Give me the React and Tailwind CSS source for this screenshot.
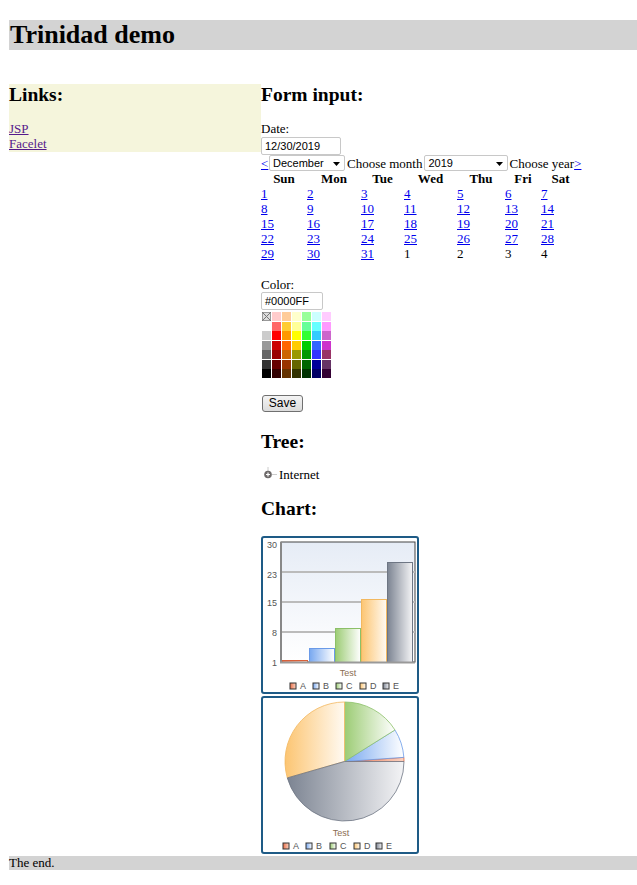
// Trinidad demo page
const days = [
  [1, 2, 3, 4, 5, 6, 7],
  [8, 9, 10, 11, 12, 13, 14],
  [15, 16, 17, 18, 19, 20, 21],
  [22, 23, 24, 25, 26, 27, 28],
  [29, 30, 31, "1", "2", "3", "4"],
];

const palette = [
  [null, "#ffcccc", "#ffcc99", "#ffffcc", "#99ff99", "#ccffff", "#ffccff"],
  ["#ffffff", "#ff6666", "#ffcc33", "#ffff99", "#66ff99", "#66ffff", "#ff99ff"],
  ["#cccccc", "#ff0000", "#ff9900", "#ffff00", "#33ff33", "#33ccff", "#cc66cc"],
  ["#999999", "#cc0000", "#ff6600", "#ffcc00", "#00cc00", "#3366ff", "#cc33cc"],
  ["#666666", "#990000", "#cc6600", "#999900", "#009900", "#3333ff", "#993366"],
  ["#333333", "#660000", "#993300", "#666600", "#006600", "#000099", "#663366"],
  ["#000000", "#330000", "#663300", "#333300", "#003300", "#000066", "#330033"],
];

const series = [
  { id: "A", from: "#e8704a", to: "#fbd2c0", stroke: "#d8603a" },
  { id: "B", from: "#78a8f0", to: "#ffffff", stroke: "#6a9ae8" },
  { id: "C", from: "#9ccc74", to: "#ffffff", stroke: "#8cc068" },
  { id: "D", from: "#fcc572", to: "#fffaf2", stroke: "#f2b860" },
  { id: "E", from: "#7c8492", to: "#f4f4f6", stroke: "#6e7684" },
];

function Grads({ prefix }) {
  return (
    <defs>
      {series.map((s) => (
        <linearGradient key={s.id} id={`${prefix}${s.id}`} x1="0" y1="0" x2="1" y2="0">
          <stop offset="0" stopColor={s.from} />
          <stop offset="1" stopColor={s.to} />
        </linearGradient>
      ))}
      <linearGradient id={`${prefix}bg`} x1="0" y1="0" x2="0" y2="1">
        <stop offset="0" stopColor="#e6ecf6" />
        <stop offset="1" stopColor="#ffffff" />
      </linearGradient>
    </defs>
  );
}

function Legend({ xs, prefix }) {
  return (
    <g fontFamily="Liberation Sans, Arial, sans-serif" fontSize="9" fill="#555">
      {series.map((s, i) => (
        <g key={s.id}>
          <rect x={xs[i]} y={145} width={6} height={6} fill={`url(#${prefix}${s.id})`} stroke="#333" strokeWidth="1" />
          <text x={xs[i] + 10} y={151}>{s.id}</text>
        </g>
      ))}
    </g>
  );
}

function BarChart() {
  const bars = [
    [19, 122],
    [46, 110],
    [72, 90],
    [98, 61],
    [124, 24],
  ];
  return (
    <svg width="154" height="154" viewBox="0 0 154 154">
      <Grads prefix="b" />
      <rect x="18" y="4" width="134" height="120" fill="url(#bbg)" stroke="#444" strokeWidth="1" />
      {[34, 64, 94].map((y) => (
        <line key={y} x1="19" x2="152" y1={y} y2={y} stroke="#bbb" strokeWidth="2" />
      ))}
      {bars.map(([x, y], i) => (
        <rect key={i} x={x + 0.5} y={y + 0.5} width="25" height={124 - y} fill={`url(#b${series[i].id})`} stroke={series[i].stroke} strokeWidth="1" />
      ))}
      <line x1="18" x2="18" y1="4" y2="125" stroke="#888" strokeWidth="2" />
      <line x1="17" x2="152" y1="124.5" y2="124.5" stroke="#999" strokeWidth="2" />
      <g fontFamily="Liberation Sans, Arial, sans-serif" fontSize="9" fill="#555" textAnchor="end">
        <text x="14" y="10">30</text>
        <text x="14" y="40">23</text>
        <text x="14" y="68">15</text>
        <text x="14" y="98">8</text>
        <text x="14" y="128">1</text>
      </g>
      <text x="85" y="138" textAnchor="middle" fontFamily="Liberation Sans, Arial, sans-serif" fontSize="9" fill="#8c6d50">Test</text>
      <Legend xs={[27, 50, 73, 97, 120]} prefix="b" />
    </svg>
  );
}

function slice(cx, cy, r, a1, a2) {
  const rad = (a) => (a * Math.PI) / 180;
  const x1 = cx + r * Math.cos(rad(a1));
  const y1 = cy - r * Math.sin(rad(a1));
  const x2 = cx + r * Math.cos(rad(a2));
  const y2 = cy - r * Math.sin(rad(a2));
  const large = a2 - a1 > 180 ? 1 : 0;
  return `M${cx} ${cy} L${x1} ${y1} A${r} ${r} 0 ${large} 0 ${x2} ${y2} Z`;
}

function PieChart() {
  const angles = [0, 4, 32, 90, 196, 360];
  return (
    <svg width="154" height="154" viewBox="0 0 154 154">
      <Grads prefix="p" />
      {series.map((s, i) => (
        <path key={s.id} d={slice(81.5, 63.5, 59.5, angles[i], angles[i + 1])} fill={`url(#p${s.id})`} stroke={s.stroke} strokeWidth="0.8" />
      ))}
      <text x="78" y="138" textAnchor="middle" fontFamily="Liberation Sans, Arial, sans-serif" fontSize="9" fill="#8c6d50">Test</text>
      <Legend xs={[20, 43, 67, 91, 113]} prefix="p" />
    </svg>
  );
}

function Select({ value, width }) {
  return (
    <span className={`inline-flex h-[16px] items-center justify-between border border-[#c8c8c8] rounded-[2px] bg-white pl-[3px] pr-[3px] font-['Liberation_Sans',Arial,sans-serif] text-[11px] leading-[14px] ${width}`}>
      <span>{value}</span>
      <svg width="9" height="8" viewBox="0 0 9 8">
        <path d="M1 3 L8 3 L4.5 7 Z" fill="#000" />
      </svg>
    </span>
  );
}

const colW = "grid-cols-[46px_54px_43px_53px_48px_36px_39px]";

export default function App() {
  return (
    <div className="min-h-screen bg-white pl-[9px] pt-[20px] font-['Liberation_Serif','Times_New_Roman',serif] text-[13px] leading-[15px] text-black">
      <h1 className="h-[30px] bg-[#d3d3d3] pl-px text-[26px] font-bold leading-[30px]">Trinidad demo</h1>

      <div className="mt-[34px] flex items-start">
        <div className="w-[252px] bg-[#f5f5dc] pb-px">
          <h2 className="h-[22px] text-[19.5px] font-bold leading-[22px]">Links:</h2>
          <div className="mt-[15px] flex flex-col">
            <a href="#" className="text-[#551a8b] underline">JSP</a>
            <a href="#" className="text-[#551a8b] underline">Facelet</a>
          </div>
        </div>

        <div className="flex flex-col items-start">
          <h2 className="h-[22px] text-[19.5px] font-bold leading-[22px]">Form input:</h2>
          <div className="mt-[15px]">Date:</div>
          <div className="mt-px flex h-[18px] w-[80px] items-center rounded-[2px] border border-[#c8c8c8] pl-[3px] font-['Liberation_Sans',Arial,sans-serif] text-[11px]">
            12/30/2019
          </div>
          <div className="flex h-[16px] items-center">
            <a href="#" className="w-[8px] text-[#0000ee] underline">&lt;</a>
            <Select value="December" width="w-[76px]" />
            <span className="ml-[2px] mr-[2px]">Choose month</span>
            <Select value="2019" width="w-[84px]" />
            <span className="ml-px">Choose year</span>
            <a href="#" className="text-[#0000ee] underline">&gt;</a>
          </div>
          <div className={`grid ${colW}`}>
            {["Sun", "Mon", "Tue", "Wed", "Thu", "Fri", "Sat"].map((d) => (
              <div key={d} className="text-center font-bold">{d}</div>
            ))}
            {days.flat().map((d, i) =>
              typeof d === "number" ? (
                <a key={i} href="#" className="text-[#0000ee] underline">{d}</a>
              ) : (
                <span key={i}>{d}</span>
              )
            )}
          </div>

          <div className="mt-[16px]">Color:</div>
          <div className="flex h-[18px] w-[62px] items-center rounded-[2px] border border-[#c8c8c8] pl-[3px] font-['Liberation_Sans',Arial,sans-serif] text-[11px]">
            #0000FF
          </div>
          <div className="ml-px mt-[2px] flex flex-col gap-y-[0.5px]">
            {palette.map((row, r) => (
              <div key={r} className="flex gap-x-px">
                {row.map((c, k) =>
                  c === null ? (
                    <svg key={k} width="9" height="9" viewBox="0 0 9 9" className="bg-[#dddddd]">
                      <rect x="0.5" y="0.5" width="8" height="8" fill="none" stroke="#999" />
                      <path d="M0 0 L9 9 M9 0 L0 9" stroke="#777" strokeWidth="1" />
                    </svg>
                  ) : (
                    <div key={k} className="h-[9px] w-[9px]" style={{ backgroundColor: c }} />
                  )
                )}
              </div>
            ))}
          </div>

          <button className="ml-px mt-[17px] h-[17px] w-[41px] rounded-[3px] border border-[#707070] bg-gradient-to-b from-[#f4f4f4] to-[#dcdcdc] font-['Liberation_Sans',Arial,sans-serif] text-[12px] leading-[15px]">
            Save
          </button>

          <h2 className="mt-[19px] h-[22px] text-[19.5px] font-bold leading-[22px]">Tree:</h2>
          <div className="mt-[14px] flex h-[15px] items-center">
            <svg width="16" height="15" viewBox="0 0 16 15" className="mr-[2px]">
              <line x1="7" y1="0" x2="7" y2="4" stroke="#ccc" />
              <line x1="11" y1="7.5" x2="16" y2="7.5" stroke="#ccc" />
              <circle cx="7" cy="7.5" r="3.8" fill="#6e6a6a" />
              <path d="M5 7.5 H9 M7 5.5 V9.5" stroke="#fff" strokeWidth="1.2" />
            </svg>
            <span>Internet</span>
          </div>

          <h2 className="mt-[16px] h-[22px] text-[19.5px] font-bold leading-[22px]">Chart:</h2>
          <div className="mt-[16px] h-[158px] w-[158px] rounded-[3px] border-2 border-[#1e5b86]">
            <BarChart />
          </div>
          <div className="mt-[2px] h-[158px] w-[158px] rounded-[3px] border-2 border-[#1e5b86]">
            <PieChart />
          </div>
        </div>
      </div>

      <div className="mt-[2px] h-[14px] bg-[#d3d3d3] leading-[14px]">The end.</div>
    </div>
  );
}
